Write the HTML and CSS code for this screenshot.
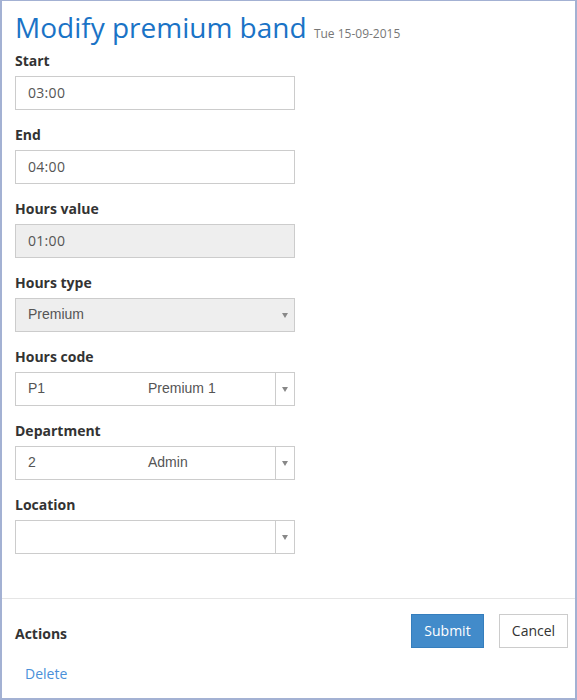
FILE: index.html
```html
<!DOCTYPE html>
<html>
<head>
<meta charset="utf-8">
<link rel="stylesheet" href="styles.css">
</head>
<body>
<div class="panel">
  <div class="content">
    <h1 class="title">Modify premium band <small class="date">Tue 15-09-2015</small></h1>
    <div class="field">
      <label class="label">Start</label>
      <div class="input">03:00</div>
    </div>
    <div class="field">
      <label class="label">End</label>
      <div class="input">04:00</div>
    </div>
    <div class="field">
      <label class="label">Hours value</label>
      <div class="input disabled">01:00</div>
    </div>
    <div class="field">
      <label class="label">Hours type</label>
      <div class="select disabled">
        <span class="sel-text">Premium</span>
        <span class="arrow plain"><span class="tri"></span></span>
      </div>
    </div>
    <div class="field">
      <label class="label">Hours code</label>
      <div class="select">
        <span class="sel-text"><span class="col-code">P1</span><span class="col-name">Premium 1</span></span>
        <span class="arrow"><span class="tri"></span></span>
      </div>
    </div>
    <div class="field">
      <label class="label">Department</label>
      <div class="select">
        <span class="sel-text"><span class="col-code">2</span><span class="col-name">Admin</span></span>
        <span class="arrow"><span class="tri"></span></span>
      </div>
    </div>
    <div class="field">
      <label class="label">Location</label>
      <div class="select">
        <span class="sel-text"></span>
        <span class="arrow"><span class="tri"></span></span>
      </div>
    </div>
  </div>
  <div class="footer">
    <div class="actions-row">
      <span class="actions-label">Actions</span>
      <div class="buttons">
        <button class="btn btn-primary">Submit</button>
        <button class="btn btn-default">Cancel</button>
      </div>
    </div>
    <a class="delete">Delete</a>
  </div>
</div>
</body>
</html>
```
FILE: styles.css
```css
html, body {
  margin: 0;
  padding: 0;
  background: #fff;
}
.panel {
  width: 577px;
  height: 700px;
  box-sizing: border-box;
  border-style: solid;
  border-color: #a3b1d3;
  border-width: 1px 2px 2px 2px;
  display: flex;
  flex-direction: column;
  font-family: "Open Sans", "Liberation Sans", sans-serif;
  color: #333;
}
.content {
  flex: 1;
  padding: 8px 13px 0 13px;
}
.title {
  margin: 0 0 6px 0;
  font-weight: normal;
  font-size: 28px;
  line-height: 36px;
  color: #1a73c6;
  white-space: nowrap;
}
.date {
  font-size: 12px;
  line-height: 1;
  color: #777;
}
.field {
  margin-bottom: 15px;
}
.label {
  display: block;
  font-weight: bold;
  font-size: 14px;
  line-height: 20px;
  margin-bottom: 5px;
  color: #333;
}
.input, .select {
  width: 280px;
  height: 34px;
  box-sizing: border-box;
  border: 1px solid #ccc;
  background: #fff;
  font-size: 14px;
  line-height: 32px;
  color: #555;
  padding-left: 12px;
}
.input {
  letter-spacing: 0.3px;
}
.disabled {
  background: #eee;
}
.select {
  display: flex;
  padding-left: 12px;
  font-family: "Liberation Sans", Arial, sans-serif;
}
.sel-text {
  flex: 1;
  display: flex;
  white-space: nowrap;
  line-height: 30px;
}
.col-code {
  width: 120px;
}
.arrow {
  width: 18px;
  border-left: 1px solid #ccc;
  display: flex;
  align-items: center;
  justify-content: center;
}
.arrow.plain {
  border-left: none;
}
.tri {
  width: 0;
  height: 0;
  border-left: 3px solid transparent;
  border-right: 3px solid transparent;
  border-top: 5px solid #888;
}
.footer {
  border-top: 1px solid #e5e5e5;
  padding: 15px 7px 0 13px;
  height: 100px;
  box-sizing: border-box;
}
.actions-row {
  display: flex;
  justify-content: space-between;
  align-items: flex-end;
}
.actions-label {
  font-weight: bold;
  font-size: 14px;
  line-height: 20px;
  margin-bottom: 4px;
}
.buttons {
  display: flex;
  gap: 15px;
}
.btn {
  height: 34px;
  box-sizing: border-box;
  font-family: "Open Sans", "Liberation Sans", sans-serif;
  font-size: 14px;
  padding: 0 0 2px 0;
  border: 1px solid #ccc;
  border-radius: 0;
}
.btn-primary {
  width: 73px;
  background: #428bca;
  border-color: #357ebd;
  color: #fff;
}
.btn-default {
  width: 69px;
  background: #fff;
  color: #333;
}
.delete {
  display: block;
  margin: 16px 0 0 10px;
  font-size: 14px;
  line-height: 20px;
  color: #4a90d9;
  width: max-content;
}
```
